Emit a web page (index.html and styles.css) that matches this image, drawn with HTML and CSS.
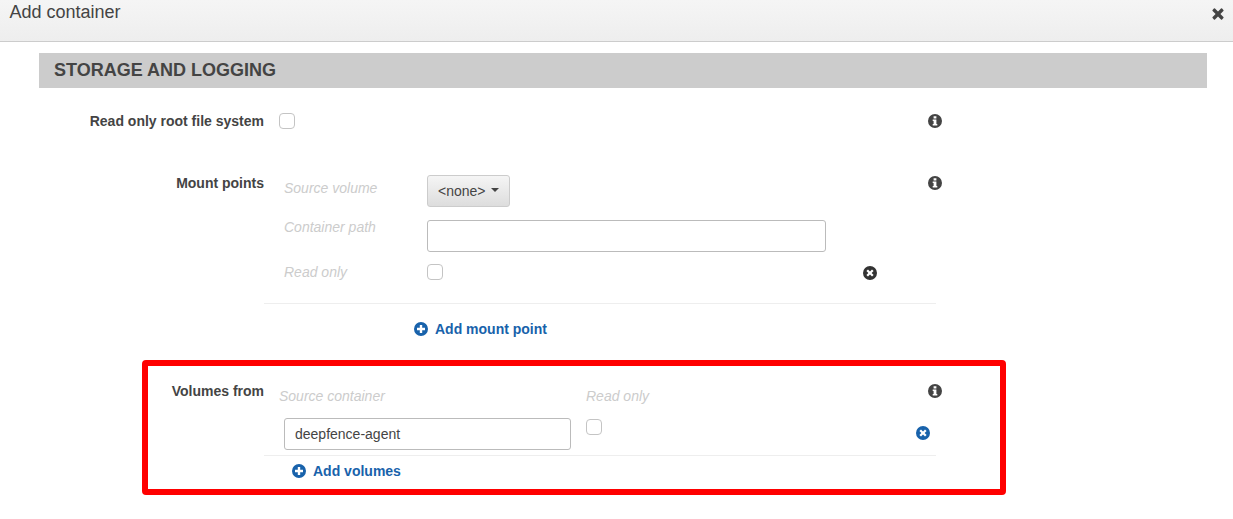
FILE: index.html
```html
<!DOCTYPE html>
<html lang="en">
<head>
<meta charset="utf-8">
<title>Add container</title>
<link rel="stylesheet" href="styles.css">
</head>
<body>
<svg class="defs" width="0" height="0" aria-hidden="true">
  <symbol id="i-info" viewBox="0 0 14 14">
    <path fill-rule="evenodd" d="M7 0a7 7 0 1 1 0 14A7 7 0 0 1 7 0zM5.6 2.2v2.2h2.8V2.2zM4.7 5.5v1.5h.9v3H4.7v1.6h4.6V10h-.9V5.5z"/>
  </symbol>
  <symbol id="i-plus" viewBox="0 0 14 14">
    <path fill-rule="evenodd" d="M7 0a7 7 0 1 1 0 14A7 7 0 0 1 7 0zM5.8 3v2.8H3v2.4h2.8V11h2.4V8.2H11V5.8H8.2V3z"/>
  </symbol>
  <symbol id="i-remove" viewBox="0 0 14 14">
    <path fill-rule="evenodd" d="M7 0a7 7 0 1 1 0 14A7 7 0 0 1 7 0zM5 3.4 3.4 5l2 2-2 2L5 10.6l2-2 2 2L10.6 9l-2-2 2-2L9 3.4l-2 2z"/>
  </symbol>
  <symbol id="i-close" viewBox="0 0 12 12">
    <path d="M3 .6 6 3.6 9 .6a.8.8 0 0 1 1.1 0l1.3 1.3a.8.8 0 0 1 0 1.1L8.4 6l3 3a.8.8 0 0 1 0 1.1l-1.3 1.3a.8.8 0 0 1-1.1 0L6 8.4l-3 3a.8.8 0 0 1-1.1 0L.6 10.1a.8.8 0 0 1 0-1.1l3-3-3-3a.8.8 0 0 1 0-1.1L1.9.6A.8.8 0 0 1 3 .6z"/>
  </symbol>
</svg>

<header class="modal-head">
  <h1 class="modal-title">Add container</h1>
  <button class="close" type="button" aria-label="Close"><svg class="icon-close"><use href="#i-close"/></svg></button>
</header>

<main class="content">
  <h2 class="section-bar">STORAGE AND LOGGING</h2>

  <section class="field field-readonly">
    <div class="field-label">Read only root file system</div>
    <div class="field-body">
      <div class="field-top">
        <div class="field-main pad-15"><input class="check" type="checkbox" aria-label="Read only root file system"></div>
        <svg class="icon info"><use href="#i-info"/></svg>
      </div>
    </div>
  </section>

  <section class="field field-mount">
    <div class="field-label">Mount points</div>
    <div class="field-body">
      <div class="field-top">
        <div class="field-main pad-20 mount-grid">
          <div class="hint hint-first">Source volume</div>
          <div class="control-first"><button class="dropdown" type="button">&lt;none&gt;<span class="caret"></span></button></div>
          <div></div>
          <div class="hint">Container path</div>
          <div><input class="text-input wide" type="text"></div>
          <div></div>
          <div class="hint hint-check">Read only</div>
          <div class="check-cell"><input class="check" type="checkbox" aria-label="Read only"></div>
          <div class="remove-cell"><svg class="icon remove-dark"><use href="#i-remove"/></svg></div>
        </div>
        <svg class="icon info"><use href="#i-info"/></svg>
      </div>
      <hr class="rule rule-mount">
      <a class="add-link add-mount" href="#"><svg class="icon"><use href="#i-plus"/></svg>Add mount point</a>
    </div>
  </section>

  <section class="field field-volumes">
    <div class="field-label">Volumes from</div>
    <div class="field-body">
      <div class="field-top">
        <div class="field-main pad-15 volumes-grid">
          <div class="hint hint-vol">Source container</div>
          <div class="hint hint-vol">Read only</div>
          <div></div>
          <div class="vol-input"><input class="text-input full" type="text" value="deepfence-agent"></div>
          <div class="vol-check"><input class="check" type="checkbox" aria-label="Read only"></div>
          <div class="vol-remove"><svg class="icon remove-blue"><use href="#i-remove"/></svg></div>
        </div>
        <svg class="icon info"><use href="#i-info"/></svg>
      </div>
      <hr class="rule rule-volumes">
      <a class="add-link add-volumes" href="#"><svg class="icon"><use href="#i-plus"/></svg>Add volumes</a>
    </div>
  </section>
</main>

<div class="highlight"></div>
</body>
</html>
```
FILE: styles.css
```css
* { box-sizing: border-box; }

html, body { margin: 0; padding: 0; }

body {
  position: relative;
  height: 519px;
  overflow: hidden;
  background: #fff;
  color: #444;
  font: 14px/20px "Liberation Sans", Arial, sans-serif;
}

.defs { position: absolute; }

.modal-head {
  display: flex;
  justify-content: space-between;
  height: 42px;
  padding: 0 9px 0 9.5px;
  background: linear-gradient(#f5f5f5, #eee);
  border-bottom: 1px solid #ccc;
}

.modal-title {
  margin: 0;
  font-size: 18px;
  font-weight: 400;
  line-height: 24px;
}

.close {
  width: 12px;
  height: 12px;
  margin-top: 8px;
  padding: 0;
  border: 0;
  background: none;
  color: #444;
}

.icon-close { display: block; width: 12px; height: 12px; fill: currentColor; }

.content { padding: 11px 26px 0 39px; }

.section-bar {
  margin: 0;
  height: 35px;
  padding-left: 15px;
  background: #ccc;
  color: #444;
  font-size: 18px;
  font-weight: 700;
  line-height: 35px;
}

.field {
  display: grid;
  grid-template-columns: 225px 672px;
}

.field-readonly { margin-top: 23px; }
.field-mount { margin-top: 42px; }
.field-volumes { margin-top: 42px; }

.field-label {
  font-weight: 700;
  text-align: right;
}

.field-top { display: flex; align-items: flex-start; }
.field-main { flex: 1 1 auto; min-width: 0; }
.pad-15 { padding-left: 15px; }
.pad-20 { padding-left: 20px; }

.icon {
  display: block;
  flex: none;
  width: 14px;
  height: 14px;
  fill: currentColor;
}

.info { margin: 3px -6px 0 0; color: #444; }

.check {
  display: block;
  appearance: none;
  width: 16px;
  height: 16px;
  margin: 2px 0 0;
  background: #fff;
  border: 1px solid #c4c4c4;
  border-radius: 4px;
}

.hint {
  color: #ccc;
  font-style: italic;
  line-height: 14px;
}

.mount-grid {
  display: grid;
  grid-template-columns: 143px 399px 1fr;
  grid-template-rows: 34px 32px 16px;
  row-gap: 13px;
  align-items: start;
}

.hint-first { padding-top: 8px; }
.control-first { padding-top: 2px; }
.hint-check { line-height: 16px; margin-top: -1px; }
.mount-grid .check-cell .check { margin-top: -1px; }
.remove-cell { padding: 1px 0 0 37px; }
.remove-dark { color: #333; }

.dropdown {
  display: inline-flex;
  align-items: center;
  height: 32px;
  padding: 0 10px;
  background: linear-gradient(#f5f5f5, #ddd);
  border: 1px solid #ccc;
  border-radius: 3px;
  color: #444;
  font: inherit;
}

.caret {
  width: 0;
  height: 0;
  margin: -2px 0 0 5px;
  border: 4px solid transparent;
  border-top-color: #444;
  border-bottom: 0;
}

.text-input {
  display: block;
  height: 32px;
  padding: 0 10px;
  background: #fff;
  border: 1px solid #bbb;
  border-radius: 3px;
  color: #444;
  font: inherit;
  outline: 0;
}

.wide { width: 399px; }
.full { width: 287px; }

.volumes-grid {
  display: grid;
  grid-template-columns: 307px 330px 14px;
  grid-template-rows: 25px 32px;
  row-gap: 12px;
  align-items: start;
}

.hint-vol { padding-top: 8px; line-height: 14px; }
.vol-input { padding-left: 5px; }
.vol-check .check { margin-top: 1px; }
.vol-remove { padding-top: 8px; }
.remove-blue { color: #1862ab; }

.rule {
  height: 1px;
  margin: 0;
  border: 0;
  background: #eee;
}

.rule-mount { margin-top: 22px; }
.rule-volumes { margin-top: 5px; }

.add-link {
  display: flex;
  align-items: center;
  gap: 7px;
  color: #1862ab;
  font-weight: 700;
  text-decoration: none;
}

.add-mount { margin-top: 15px; padding-left: 150px; }
.add-volumes { margin-top: 5px; padding-left: 28px; }

.highlight {
  position: absolute;
  left: 142px;
  top: 360px;
  width: 864px;
  height: 135px;
  border: 6px solid #f00;
  border-radius: 4px;
  pointer-events: none;
}
```
